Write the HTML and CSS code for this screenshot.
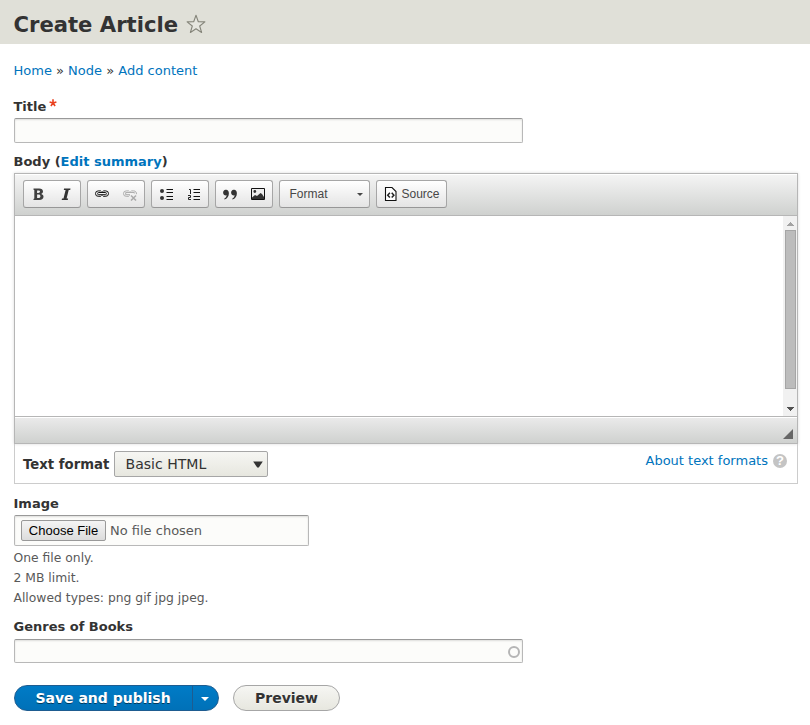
FILE: index.html
```html
<!DOCTYPE html>
<html lang="en">
<head>
<meta charset="utf-8">
<title>Create Article</title>
<link rel="stylesheet" href="styles.css">
</head>
<body>
<header class="page-header">
  <h1>Create Article</h1>
  <svg class="star" width="20" height="20" viewBox="0 0 20 20"><path d="M10 1.2 12.3 7.7 18.9 7.9 13.7 12 15.6 18.5 10 14.8 4.4 18.5 6.3 12 1.1 7.9 7.7 7.7Z" fill="#e6e6df" stroke="#85857a" stroke-width="1.1" stroke-linejoin="round"/></svg>
</header>
<main>
  <nav class="breadcrumb"><a href="#">Home</a> » <a href="#">Node</a> » <a href="#">Add content</a></nav>
  <label class="label title-label">Title<svg class="required" width="8" height="8" viewBox="0 0 8 8"><path d="M4 .2V4L.6 2.900M4 4l3.400-1.100M4 4 1.900 7M4 4l2.100 3" fill="none" stroke="#e9401f" stroke-width="1.600"/></svg></label>
  <div class="field title-field"></div>
  <div class="label body-label">Body (<a href="#">Edit summary</a>)</div>

  <section class="editor">
    <div class="toolbar">
      <div class="group">
        <span class="tool"><svg width="16" height="16" viewBox="0 0 16 16"><path fill="#404040" fill-rule="evenodd" d="M3.500 2.600h5.700c2.400 0 3.800 1 3.800 2.900 0 1.200-.7 2-1.800 2.400 1.500.4 2.300 1.300 2.300 2.700 0 2.200-1.500 3.400-4.200 3.400H3.500v-1.100l.8-.3V4l-.8-.3zM7.100 4.400v2.500h1.100c1.200 0 1.800-.4 1.800-1.300S9.400 4.400 8.300 4.400zm0 4.200v3.500h1.400c1.300 0 1.900-.6 1.900-1.800s-.6-1.700-1.900-1.700z"/></svg></span>
        <span class="tool"><svg width="16" height="16" viewBox="0 0 16 16"><path fill="#333" d="M6.100 2.600h6.400l-.3 1.400h-1.500L8.600 12.600h1.500L9.800 14H3.700l.3-1.400h1.500L7.600 4H5.800z"/></svg></span>
      </div>
      <div class="group">
        <span class="tool"><svg width="16" height="16" viewBox="0 0 16 16"><g fill="none" stroke="#111"><path d="M7.500 5.700 6.700 4.900H4.200a2.700 2.700 0 0 0 0 5.400h2.500l.8-.8M8.500 5.700l.8-.8h2.500a2.700 2.700 0 0 1 0 5.400H9.300l-.8-.8"/><rect x="3.700" y="6.500" width="8.600" height="2.200" rx=".8"/></g></svg></span>
        <span class="tool disabled"><svg width="16" height="16" viewBox="0 0 16 16"><g fill="none" stroke="#111"><path d="M7.500 5.700 6.700 4.900H4.200a2.700 2.700 0 0 0 0 5.400h2.500l.8-.8M8.500 5.700l.8-.8h2.500a2.700 2.700 0 0 1 2.600 3.300"/><path d="M8 8.700H3.700V6.500h8.600v1"/><path d="m9 9.500 5 5m0-5-5 5" stroke-width="1.500"/></g></svg></span>
      </div>
      <div class="group">
        <span class="tool"><svg width="16" height="16" viewBox="0 0 16 16"><circle cx="4" cy="5" r="2" fill="#333"/><circle cx="4" cy="12" r="2" fill="#333"/><path stroke="#111" d="M8.500 3.500H15M8.500 6.500H15M8.500 10.500H15M8.500 13.500H15"/></svg></span>
        <span class="tool"><svg width="16" height="16" viewBox="0 0 16 16"><path fill="none" stroke="#222" d="M3 3.500h1.500V8M2 9.500h2.500v2h-2v2H5"/><path stroke="#111" d="M7.500 3.500H14M7.500 6.500H14M7.500 10.500H14M7.500 13.500H14"/></svg></span>
      </div>
      <div class="group">
        <span class="tool"><svg width="16" height="16" viewBox="0 0 16 16"><path fill="#333" d="M3.600 3.800C5.400 3.400 6.900 4.900 6.900 7.200c0 3.200-1.800 5.600-4.400 6.300l-.3-.8c1.500-.8 2.300-2 2.400-3.400C2.800 9.700 1.100 8.500 1.100 6.700c0-1.500 1-2.600 2.500-2.900zM11.600 3.800c1.800-.4 3.300 1.100 3.300 3.400 0 3.200-1.800 5.600-4.400 6.300l-.3-.8c1.500-.8 2.300-2 2.400-3.400-1.800.4-3.500-.8-3.500-2.600 0-1.500 1-2.600 2.500-2.900z"/></svg></span>
        <span class="tool"><svg width="16" height="16" viewBox="0 0 16 16"><path fill="#eee" stroke="#111" d="M1.500 2.500h13v11h-13z"/><path fill="#333" d="M2 13v-1.500L5 9l2 1 3.500-3L12 8l2 3v2z"/><circle cx="4.800" cy="5.500" r="1.400" fill="#333"/></svg></span>
      </div>
      <div class="combo"><span>Format</span><svg width="6" height="3" viewBox="0 0 6 3"><path d="M0 0h6L3 3z" fill="#474747"/></svg></div>
      <div class="source"><svg width="16" height="16" viewBox="0 0 16 16"><path fill="#fff" stroke="#111" stroke-width="1.100" d="M2.500 1.500h6.500l4 4v9H2.500z"/><path fill="none" stroke="#222" stroke-width="1.500" d="M6.900 6.800 4.700 9.200l2.200 2.400M8.700 6.800l2.200 2.400-2.200 2.400"/></svg><span>Source</span></div>
    </div>
    <div class="canvas">
      <div class="scrollbar">
        <svg width="7" height="4" viewBox="0 0 7 4" shape-rendering="crispEdges"><path d="M3 0h1v1h1v1h1v1h1v1H0V3h1V2h1V1h1z" fill="#a3a3a3"/></svg>
        <div class="thumb"></div>
        <svg width="7" height="4" viewBox="0 0 7 4" shape-rendering="crispEdges"><path d="M0 0h7v1H6v1H5v1H4v1H3V3H2V2H1V1H0z" fill="#505050"/></svg>
      </div>
    </div>
    <div class="statusbar"><svg width="10" height="10" viewBox="0 0 10 10"><path d="M10 0v10H0z" fill="#666"/></svg></div>
  </section>
  <section class="format-row">
    <span class="label">Text format</span>
    <div class="select"><span>Basic HTML</span><svg width="10" height="7" viewBox="0 0 10 7"><path d="M.2.5h9.600L5.800 6.500H4.200z" fill="#333"/></svg></div>
    <a class="about" href="#">About text formats</a>
    <span class="help">?</span>
  </section>

  <div class="label image-label">Image</div>
  <div class="field file-field"><button class="choose" type="button">Choose File</button><span>No file chosen</span></div>
  <div class="description">One file only.<br>2 MB limit.<br>Allowed types: png gif jpg jpeg.</div>
  <div class="label genres-label">Genres of Books</div>
  <div class="field genres-field"><i class="throbber"></i></div>
  <div class="actions">
    <div class="save"><span class="save-text">Save and publish</span><span class="save-more"><svg width="8" height="4" viewBox="0 0 8 4"><path d="M0 0h8L4 4z" fill="#fff"/></svg></span></div>
    <div class="preview">Preview</div>
  </div>
</main>
</body>
</html>
```
FILE: styles.css
```css
* { box-sizing: border-box; }
body {
  margin: 0;
  background: #fff;
  color: #333;
  font: 13px/20px "DejaVu Sans", sans-serif;
}
a { color: #0074bd; text-decoration: none; }
svg { display: block; flex: none; }
.page-header {
  display: flex;
  height: 44px;
  padding: 14px 0 0 13.500px;
  background: #e0e0d8;
}
h1 { margin: 0; font-size: 21.130px; line-height: 21px; }
.star { margin-left: 8px; }
main { padding: 0 12px 0 14px; }
.breadcrumb { height: 53px; padding-top: 17px; margin-left: -.5px; font-size: 13.008px; }
.label { font-weight: bold; margin-left: -.5px; font-size: 13.008px; }
.title-label { display: flex; height: 21px; }
.required { margin: 2px 0 0 3px; }
.field {
  border: 1px solid #b8b8b8;
  border-top-color: #999;
  border-radius: 2px;
  background: #fcfcfa;
  box-shadow: inset 0 1px 2px rgba(0, 0, 0, .125);
}
.title-field { width: 509px; height: 25px; }
.body-label { height: 30px; padding-top: 9px; }
.editor {
  height: 271px;
  border: 1px solid #b6b6b6;
  box-shadow: 0 0 3px rgba(0, 0, 0, .15);
}
.toolbar {
  display: flex;
  gap: 6px;
  height: 42px;
  padding: 6px 8px;
  border-bottom: 1px solid #b6b6b6;
  background: linear-gradient(#f5f5f5, #cfd1cf);
  box-shadow: inset 0 1px 0 #fff;
  font: 12px/26px "Liberation Sans", sans-serif;
  color: #474747;
}
.group, .combo, .source {
  display: flex;
  align-items: center;
  height: 28px;
  border: 1px solid #a6a6a6;
  border-bottom-color: #979797;
  border-radius: 3px;
  background: linear-gradient(#fff, #e4e4e4);
}
.tool { padding: 0 6px; }
.disabled { opacity: .3; }
.combo { width: 91px; padding: 0 6px 0 9.500px; justify-content: space-between; }
.source { width: 71px; padding-left: 6px; gap: 2.500px; }
.canvas { display: flex; justify-content: flex-end; height: 200px; }
.scrollbar {
  display: flex;
  flex-direction: column;
  align-items: center;
  width: 14px;
  padding-top: 6px;
  background: #f1f1f1;
}
.thumb {
  width: 11px;
  height: 159px;
  margin: 4px 0 18px 1px;
  border: 1px solid #a5a5a5;
  background: #bcbcbc;
}
.scrollbar svg { margin-left: 1px; }
.statusbar {
  display: flex;
  justify-content: flex-end;
  height: 27px;
  padding: 12px 4px 0 0;
  border-top: 1px solid #b6b6b6;
  background: linear-gradient(#ebebeb, #cfd1cf);
  box-shadow: inset 0 1px 0 #fff;
}
.format-row {
  display: flex;
  height: 40px;
  padding: 7px 10px 0 8px;
  border: 1px solid #ccc;
  border-top: 0;
}
.format-row .label { margin: 0; padding-top: 4px; width: 91px; font-size: 13.250px; }
.select {
  display: flex;
  align-items: center;
  justify-content: space-between;
  width: 154px;
  height: 26px;
  padding: 0 4px 0 10.500px;
  border: 1px solid #a6a6a6;
  border-radius: 2px;
  background: linear-gradient(#f6f6f3, #e7e7df);
  font-size: 14.050px;
}
.about { margin-left: auto; font-size: 13.008px; }
.help {
  width: 14px;
  height: 14px;
  margin: 3px 0 0 5px;
  border-radius: 50%;
  background: #c4c4c4;
  color: #fff;
  font: bold 13px/14px "Liberation Sans", sans-serif;
  text-align: center;
}
.image-label { height: 31px; padding-top: 10px; }
.file-field {
  display: flex;
  align-items: center;
  width: 295px;
  height: 31px;
  padding-left: 6px;
  color: #595959;
}
.choose {
  width: 85px;
  height: 21px;
  margin: 0 4px 0 0;
  padding: 0;
  border: 1px solid #999;
  border-radius: 2px;
  background: linear-gradient(#f4f4f4, #dcdcdc);
  color: #000;
  font: 13px/17px "Liberation Sans", sans-serif;
}
.description {
  height: 62px;
  padding-top: 2px;
  margin-left: -.5px;
  color: #595959;
  font-size: 12.358px;
}
.genres-label { height: 31px; padding-top: 9px; }
.genres-field {
  display: flex;
  align-items: center;
  justify-content: flex-end;
  width: 509px;
  height: 24px;
  padding-right: 2.500px;
}
.throbber { width: 12px; height: 12px; margin-top: 1px; border: 2px solid #b5b5b5; border-radius: 50%; }
.actions { display: flex; gap: 14px; margin-top: 22px; font: bold 14px/24px "DejaVu Sans", sans-serif; }
.save {
  display: flex;
  width: 205px;
  height: 26px;
  border: 1px solid #1e5c90;
  border-radius: 13px;
  background: linear-gradient(#007bc6, #0071b8);
  color: #fff;
  overflow: hidden;
}
.save-text { width: 177px; padding-right: 1px; text-align: center; text-shadow: 0 1px rgba(0, 0, 0, .5); }
.save-more { display: flex; flex: 1; align-items: center; padding: 2px 0 0 8px; border-left: 1px solid #1e5c90; }
.preview {
  width: 107px;
  height: 26px;
  border: 1px solid #a6a6a6;
  border-radius: 13px;
  background: linear-gradient(#f6f6f3, #e7e7df);
  text-align: center;
  text-shadow: 0 1px rgba(255, 255, 255, .6);
}
```
